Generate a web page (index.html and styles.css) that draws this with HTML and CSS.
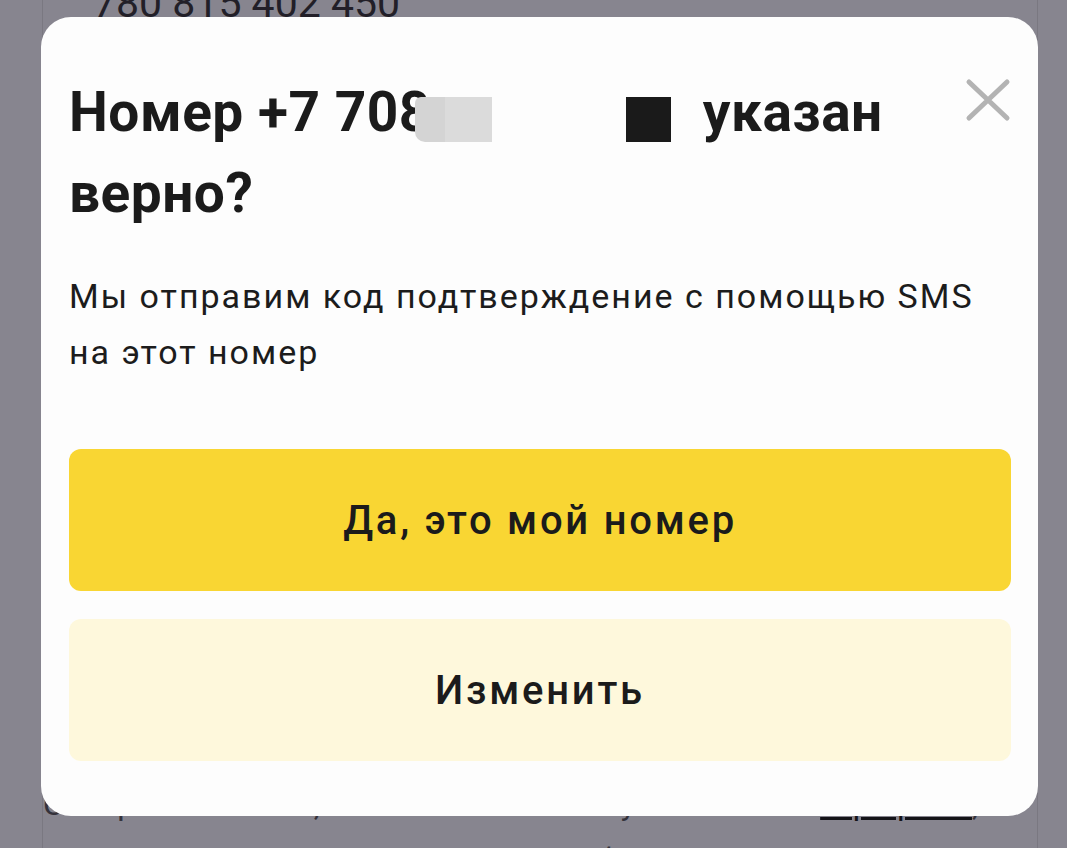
FILE: index.html
```html
<!DOCTYPE html>
<html lang="ru">
<head>
<meta charset="utf-8">
<title>Подтверждение номера</title>
<link rel="stylesheet" href="styles.css">
</head>
<body>
<div class="page">
  <div class="card">
    <div class="account">780 815 402 450</div>
    <p class="terms">Совершая платёж, вы соглашаетесь с условиями и <a href="#" class="terms-link">тарифами</a>, Правилами использования сервиса банковской системы</p>
  </div>
</div>
<div class="overlay">
  <div class="modal">
    <div class="modal-head">
      <h1 class="modal-title">Номер +7 708<span class="mask mask-light"></span><span class="mask mask-dark"></span>указан верно?</h1>
      <button class="close" aria-label="Закрыть">
        <svg width="46" height="46" viewBox="0 0 46 46"><path d="M4 4L42 40M42 4L4 40" stroke="#b3b3b3" stroke-width="5" stroke-linecap="round" fill="none"/></svg>
      </button>
    </div>
    <p class="modal-text">Мы отправим код подтверждение с помощью SMS на этот номер</p>
    <div class="actions">
      <button class="btn btn-primary">Да, это мой номер</button>
      <button class="btn btn-secondary">Изменить</button>
    </div>
  </div>
</div>
</body>
</html>
```
FILE: styles.css
```css
* { box-sizing: border-box; }
html, body { margin: 0; padding: 0; }
body {
  font-family: Roboto, "Noto Sans", "Liberation Sans", sans-serif;
  background: #87858f;
  width: 1067px;
  height: 848px;
  overflow: hidden;
  position: relative;
}
.page {
  height: 848px;
  padding: 0 29px 0 42px;
}
.card {
  height: 100%;
  border-left: 1px solid #7a7881;
  border-right: 1px solid #7a7881;
  display: flex;
  flex-direction: column;
  justify-content: space-between;
}
.account {
  margin-top: -17px;
  padding-left: 50px;
  font-size: 41px;
  line-height: 40px;
  color: #221f28;
}
.terms {
  margin: 0 0 -40px 0;
  font-size: 32px;
  line-height: 56px;
  color: #34323b;
}
.terms-link {
  color: #141318;
  text-decoration-thickness: 3px;
}

.overlay {
  position: absolute;
  inset: 0;
}
.modal {
  position: absolute;
  top: 17px;
  left: 41px;
  width: 997px;
  height: 799px;
  background: #fdfdfd;
  border-radius: 30px;
  padding: 55px 27px 55px 28px;
  display: flex;
  flex-direction: column;
}
.modal-head {
  display: flex;
  align-items: flex-start;
  justify-content: space-between;
}
.modal-title {
  margin: 0;
  flex: 1;
  max-width: 880px;
  font-size: 55px;
  line-height: 81px;
  font-weight: 700;
  letter-spacing: 0.5px;
  color: #1b1b1b;
}
.mask {
  display: inline-block;
  height: 45px;
  vertical-align: -11px;
}
.mask-light {
  width: 77px;
  margin-left: -16px;
  background: linear-gradient(to right, #d4d4d4 0, #d4d4d4 30px, #dbdbdb 30px);
  border-radius: 6px 0 0 10px;
}
.mask-dark {
  width: 45px;
  margin-left: 134px;
  margin-right: 32px;
  background: #1a1a1a;
}
.close {
  margin-top: 6px;
  padding: 0;
  border: 0;
  background: none;
  width: 46px;
  height: 46px;
  display: block;
}
.close svg { display: block; }
.modal-text {
  margin: 34px 0 0 0;
  font-size: 34px;
  line-height: 56px;
  letter-spacing: 2px;
  color: #1c1c1c;
}
.actions {
  margin-top: 69px;
  display: flex;
  flex-direction: column;
  gap: 28px;
}
.btn {
  height: 142px;
  border: 0;
  border-radius: 12px;
  font-family: Roboto, "Noto Sans", sans-serif;
  font-size: 40px;
  font-weight: 500;
  letter-spacing: 2.75px;
  color: #1b1b1b;
}
.btn-primary { background: #f9d633; }
.btn-secondary { background: #fef8dc; }
```
